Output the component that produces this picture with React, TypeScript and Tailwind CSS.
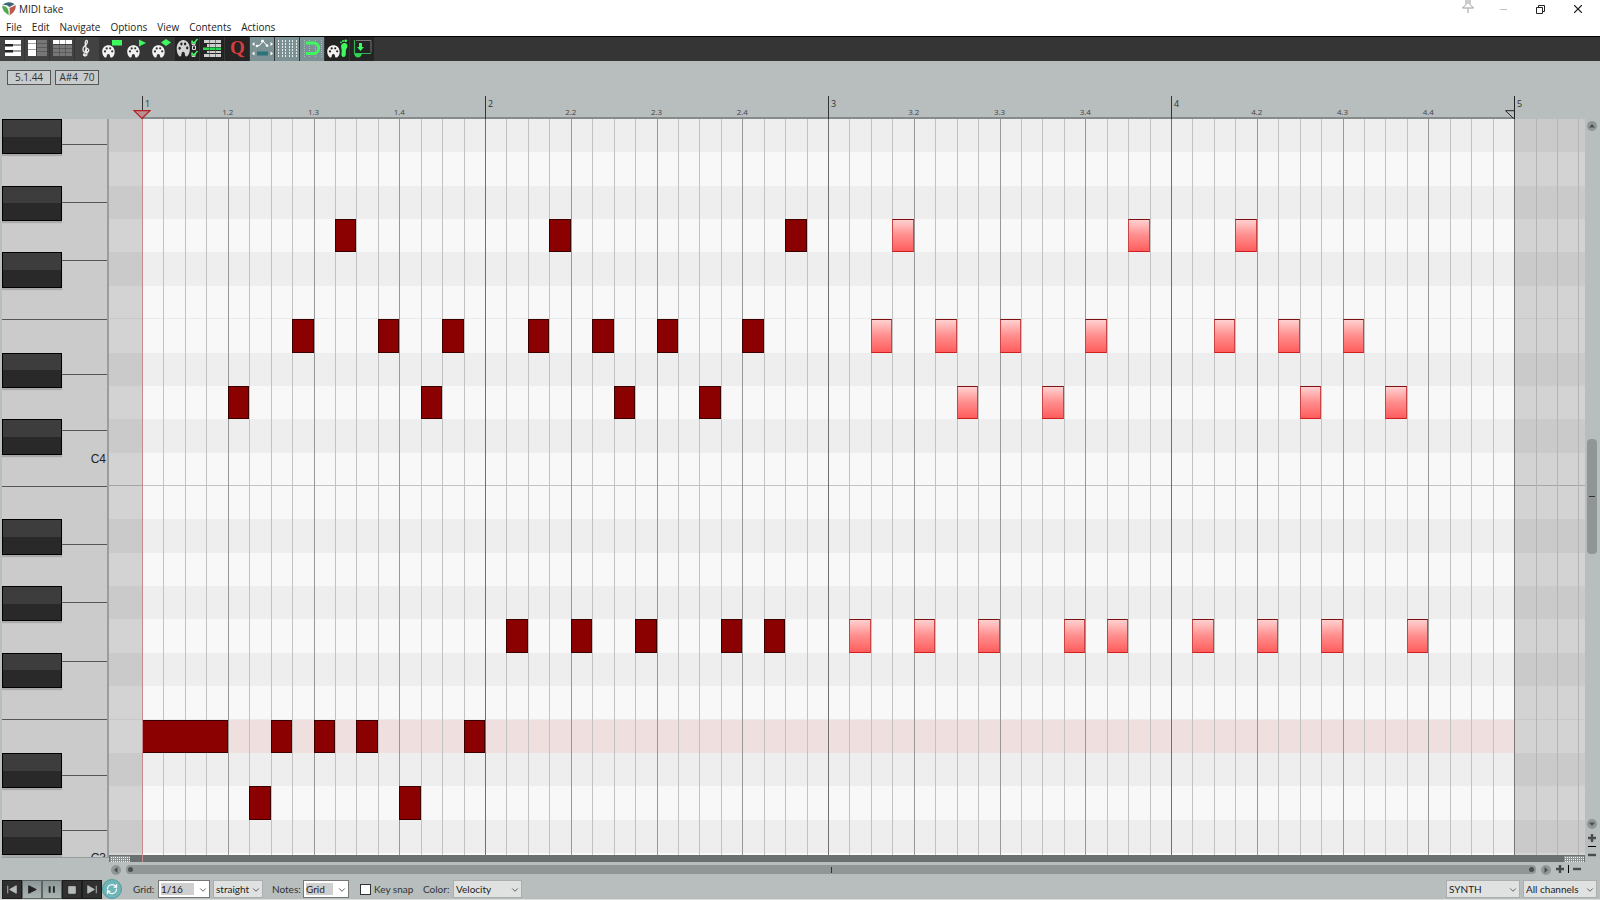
import React from "react";
import { ChevronDown, Minus, X, RefreshCw } from "lucide-react";

type Note = { row: number; step: number; length?: number; soft?: boolean };

const ROWS = Array.from({ length: 22 }, (_, i) => i);
const BLACK_ROWS = [0, 2, 4, 7, 9, 12, 14, 16, 19, 21];
const STEPS = Array.from({ length: 64 }, (_, i) => i);
const BEATS = Array.from({ length: 16 }, (_, i) => i);

// Heights of the white keys from the top, measured in semitone rows.
const WHITE_KEYS = [0.75, 1.75, 1.75, 1.75, 1.667, 1.667, 1.666, 1.75, 1.75, 1.75, 1.75, 1.667, 1.667, 0.666];

const PATTERN: [number, number[]][] = [
  [3, [9, 19, 30, 35, 46, 51]],
  [6, [7, 11, 14, 18, 21, 24, 28, 34, 37, 40, 44, 50, 53, 56]],
  [8, [4, 13, 22, 26, 38, 42, 54, 58]],
  [15, [17, 20, 23, 27, 29, 33, 36, 39, 43, 45, 49, 52, 55, 59]],
  [18, [0, 6, 8, 10, 15]],
  [20, [5, 12]],
];

const NOTES: Note[] = PATTERN.flatMap(([row, steps]) =>
  steps.map((step) => ({ row, step, length: row === 18 && step === 0 ? 4 : 1, soft: step >= 33 })),
);

function Palette({ x, y, sx = 1, sy = 1, fill = "#f2f2f2", hole = "#333" }: { x: number; y: number; sx?: number; sy?: number; fill?: string; hole?: string }) {
  return (
    <g transform={`translate(${x} ${y}) scale(${sx} ${sy})`}>
      <path
        d="M6.5 0.3C2.8 .3 .2 3 .2 6.6c0 2.6 1 4.8 2.6 5.8 1 .5 1.8 0 1.9-1.2.1-1.4.7-2.2 1.7-2.2s1.500.8 1.600 2c.1 1.300.8 1.900 2 1.400 1.700-.7 2.700-3 2.700-5.600C12.700 3 10 .3 6.500 .3Z"
        fill={fill}
      />
      <circle cx="3" cy="6.400" r="1.100" fill={hole} />
      <circle cx="4.700" cy="3.400" r="1.100" fill={hole} />
      <circle cx="8.200" cy="3.300" r="1.100" fill={hole} />
      <circle cx="10.200" cy="6.300" r="1.100" fill={hole} />
    </g>
  );
}

const G = "#3dfa5e";

const TOOLS: { name: string; tone?: "group" | "dark" | "on"; art: React.ReactNode }[] = [
  {
    name: "Piano roll",
    tone: "group",
    art: (
      <>
        <path d="M5 4h16v4.500H5zM5 9.500h16v5H5zM5 15.500h16V20H5z" fill="#fff" />
        <path d="M5 8h8v2.500H5zM5 14h8v2.500H5z" fill="#222" />
      </>
    ),
  },
  {
    name: "Named notes",
    tone: "group",
    art: (
      <>
        <path d="M3 4h8v3.500H3zM3 8h8v5.500H3zM3 14h8v6H3z" fill="#fff" />
        <path d="M12 4h10v3.500H12zM12 8h10v3.500H12zM12 12h10v3.500H12zM12 16h10v4H12z" fill="#777" />
      </>
    ),
  },
  {
    name: "Event list",
    tone: "group",
    art: (
      <>
        <path d="M3 4h6v4H3zM9.500 4h6v4h-6zM16 4h6v4h-6z" fill="#fff" />
        <path d="M3 9h6v3H3zM9.500 9h6v3h-6zM16 9h6v3h-6zM3 12.500h6v3.500H3zM9.500 12.500h6v3.500h-6zM16 12.500h6v3.500h-6zM3 16.500h6V20H3zM9.500 16.500h6V20h-6zM16 16.500h6V20h-6z" fill="#777" />
      </>
    ),
  },
  {
    name: "Musical notation",
    tone: "group",
    art: (
      <g fill="none" stroke="#eee" strokeWidth="1.300" strokeLinecap="round">
        <path d="M10.800 15.500c-1.200-1.800.4-3.400 1.800-2.900 1.900.7 1.400 4.100-1.200 4.100-3.700 0-4.500-4-2.200-6.200 1.800-1.800 3.600-3.100 3.200-5.200-.3-1.300-1.700-1.400-2.100.7-.4 2.400 1.800 9.100 1.700 12 0 2.200-3 2.600-3.100.9" />
        <circle cx="9.400" cy="18.700" r=".8" fill="#eee" />
      </g>
    ),
  },
  { name: "Color by rectangle", art: (<><Palette x={2} y={9} /><path d="M12 4h10v5.500H12z" fill={G} /></>) },
  { name: "Color by triangle", art: (<><Palette x={2} y={9} /><path d="M14 3.500v7l7-3.500z" fill={G} /></>) },
  { name: "Color by diamond", art: (<><Palette x={2} y={9} /><path d="M16 3l5 3.500-5 3.500-5-3.500z" fill={G} /></>) },
  {
    name: "Color options",
    tone: "dark",
    art: (
      <>
        <Palette x={1.5} y={3.5} sx={1.05} sy={1.35} fill="#d4d4d4" hole="#222" />
        <path d="M17.500 10h3v3.500h-3zM20 5.500v3h-3v-4M20 17v3.500h-3v-4" fill="none" stroke="#ddd" />
        <path d="M17 5l1.600 2.500L22.500 3M17 17l1.600 2.500L22.500 15" fill="none" stroke={G} strokeWidth="1.400" />
      </>
    ),
  },
  {
    name: "Lanes",
    tone: "dark",
    art: (
      <>
        <path d="M4 4h17v3H4zM7 8h14v3H7zM7 15h14v2H7zM4 18h17v3H4z" fill="#cfcfcf" />
        <path d="M3 11.500h18v2.500H3z" fill="#2fd552" />
        <path d="M9.500 4v17M15.500 4v17" stroke="#555" strokeWidth=".7" />
      </>
    ),
  },
  {
    name: "Quantize",
    tone: "dark",
    art: (
      <text x="12.500" y="18" textAnchor="middle" fill="#d93c3c" fontSize="19" fontWeight="700" fontFamily="Liberation Serif, serif">
        Q
      </text>
    ),
  },
  {
    name: "Envelope points",
    tone: "on",
    art: (
      <>
        <path d="M6 10.500l4-1.500 3-4 3 3.500 2 2" fill="none" stroke="#fff" />
        <g fill="#fff">
          <circle cx="7" cy="10" r="1.300" />
          <circle cx="12.500" cy="5" r="1.500" />
          <circle cx="17" cy="9.500" r="1.300" />
          <path d="M4.500 6v4L2 8zM20.500 6v4L23 8zM4.500 15.500v4L2 17.500zM20.500 15.500v4l2.500-2z" />
        </g>
        <path d="M7 15.500h11v4H7z" fill="#2a7378" />
      </>
    ),
  },
  {
    name: "Show grid",
    tone: "on",
    art: <path d="M3.500 4v17M7.500 4v17M10.500 4v17M14.500 4v17M17.500 4v17M21.500 4v17" stroke="#e4eaea" strokeDasharray="2 1" />,
  },
  {
    name: "Snap to grid",
    tone: "on",
    art: (
      <>
        <path d="M4.500 4v17M9.500 4v17M15.500 4v17M21.500 4v17" stroke="#a6bcb8" strokeDasharray="1 1" />
        <path d="M6 7h7.500a5.250 5.250 0 0 1 0 10.500H6" fill="none" stroke={G} strokeWidth="2.800" />
      </>
    ),
  },
  {
    name: "Step input",
    tone: "dark",
    art: (
      <>
        <Palette x={2} y={9} hole="#222" />
        <path d="M17 8c2-2 5.500-1 5.500 2 0 2-1.500 2.500-1.600 4.300C20.600 16.500 21.500 21 18.700 21s-2.300-3-2-5.500S15 10 17 8Z" fill={G} />
        <circle cx="16" cy="6.300" r=".9" fill={G} />
        <circle cx="18" cy="5" r="1" fill={G} />
        <circle cx="20.700" cy="4.800" r="1.400" fill={G} />
      </>
    ),
  },
  {
    name: "Dock editor",
    tone: "dark",
    art: (
      <>
        <path d="M6 4.500h15v12" fill="none" stroke="#777" />
        <path d="M4.500 4v13.500h16.500" fill="none" stroke="#2fb552" strokeWidth="1.200" />
        <path d="M9 7h3v4h2l-3.500 4L7 11h2z" fill={G} />
        <path d="M4 17.500h8q-1 4-4 4t-4-4z" fill="#2fd552" />
      </>
    ),
  },
];

const TONES = {
  group: "bg-[#424242]",
  dark: "bg-[#242424]",
  on: "bg-[#7c9194]",
  plain: "bg-[#353535]",
};

function Toolbar() {
  return (
    <div role="toolbar" className="flex h-[25px] shrink-0 items-stretch border-t border-black bg-[#353535]">
      {TOOLS.map((t) => (
        <button key={t.name} aria-label={t.name} className={`w-[25px] overflow-hidden border-r border-[#353535] ${TONES[t.tone ?? "plain"]}`}>
          <svg viewBox="0 1 24 24" className="h-[24px] w-[24px]">{t.art}</svg>
        </button>
      ))}
    </div>
  );
}

function TitleBar() {
  return (
    <header className="flex h-[18px] shrink-0 items-center bg-white pl-[2px]">
      <svg viewBox="0 0 14 14" className="h-[14px] w-[14px]">
        <path d="M0 3Q3 0 7 0t7 3c.3 4-2 8-7 11C2 11-.2 7 0 3Z" fill="#e9f0ee" />
        <path d="M.3 3Q3.500.2 7 .3q3 0 5.500 1.700L7.500 5Q4.500 2 .3 3Z" fill="#3f6473" />
        <path d="M.2 4Q4 3.500 5.500 6.500T6.500 13C2.500 10.500.2 7.500.2 4Z" fill="#4fa84a" />
        <path d="M7.500 6L13.700 3.300C14 7.500 11.500 11 7.700 13.300Q8.300 9 7.500 6Z" fill="#bd5950" />
      </svg>
      <h1 className="ml-[3px] text-[10px] leading-[18px]">MIDI take</h1>
      <div className="ml-auto flex h-full items-center">
        <button aria-label="Pin window" className="flex h-full w-[35px] justify-center">
          <svg viewBox="0 2 14 14" className="h-[14px] w-[14px]" fill="none" stroke="#999">
            <path d="M4 .5h6M5 1v5.500L1.500 10h11L9 6.500V1M7 1v5M7 10.500V15" />
          </svg>
        </button>
        <button aria-label="Minimize" className="flex w-[36px] justify-center text-[#bbb]">
          <Minus size={11} strokeWidth={2} />
        </button>
        <button aria-label="Restore" className="flex w-[38px] justify-center">
          <svg viewBox="0 0 10 10" className="h-[10px] w-[10px]" fill="none" stroke="#222">
            <path d="M1.500 3.500h6v6h-6zM3.500 3.500v-2h6v6h-2" />
          </svg>
        </button>
        <button aria-label="Close" className="flex w-[41px] justify-start pl-[12px]">
          <X size={14} strokeWidth={1.900} />
        </button>
      </div>
    </header>
  );
}

function Ruler() {
  return (
    <div className="flex h-[23px] shrink-0 pr-[15px] pl-[109px]">
      <div className="w-[33px]" />
      <div className="relative grid flex-1 grid-cols-16 border-b-2 border-[#868c8b]">
        {BEATS.map((b) => {
          const bar = Math.floor(b / 4) + 1;
          return b % 4 === 0 ? (
            <div key={b} className="-mb-[2px] border-l border-[#333] pl-[2px] text-[9px] leading-[16px] text-[#333]">{bar}</div>
          ) : (
            <div key={b} className="flex items-end text-[8px] leading-[10px] text-[#444]">
              <span className="-translate-x-1/2">{`${bar}.${(b % 4) + 1}`}</span>
            </div>
          );
        })}
        <svg viewBox="0 0 18 9" className="absolute -bottom-[2px] -left-[9px] h-[9px] w-[18px]">
          <path d="M1 .7h16L9 8.500z" fill="#b98f90" stroke="#b52025" strokeWidth="1.200" />
        </svg>
        <svg viewBox="0 0 9 9" className="absolute right-0 -bottom-[2px] h-[9px] w-[9px]">
          <path d="M.5.7H9M.5.7L8.500 8.500" fill="none" stroke="#222" />
        </svg>
      </div>
      <div className="w-[71px] border-l border-[#222] pl-[2px] text-[9px] leading-[16px] text-[#333]">5</div>
    </div>
  );
}

function Keyboard() {
  return (
    <div className="mb-[7px] ml-[2px] flex w-[107px] shrink-0 flex-col overflow-hidden border-r-2 border-b border-[#989e9d] bg-[#cbcbcb]">
      <div className="relative flex min-h-0 flex-1 flex-col">
        {WHITE_KEYS.map((h, i) => (
          <div key={i} className={i < WHITE_KEYS.length - 1 ? "min-h-0 basis-0 border-b border-[#555]" : "min-h-0 basis-0"} style={{ flexGrow: h }} />
        ))}
        <div className="absolute inset-0 grid grid-rows-22">
          {ROWS.map((r) =>
            BLACK_ROWS.includes(r) ? (
              <div key={r} className="-mb-[2px] flex w-[60px] flex-col border border-black bg-[#292929] shadow-[0_2px_1px_#aaaaaa]">
                <div className="h-1/2 bg-[#3d3d3d]" />
              </div>
            ) : (
              <div key={r} className="pr-px text-right font-['Liberation_Sans',sans-serif] text-[12px] leading-[12px] text-[#222]">{r === 10 ? "C4" : ""}</div>
            ),
          )}
        </div>
      </div>
      <div className="h-[4px] shrink-0 pr-px text-right font-['Liberation_Sans',sans-serif] text-[12px] leading-[10px] text-[#222]">C3</div>
    </div>
  );
}

function stepLine(i: number) {
  if (i === 0) return "border-l border-transparent";
  if (i % 16 === 0) return "border-l border-[#707070]";
  if (i % 4 === 0) return "border-l border-[#989898]";
  return "border-l border-[#c2c2c2]";
}

function Roll() {
  return (
    <div className="relative min-h-0 flex-1 bg-[#f8f8f8] pb-[2px]">
      <div className="grid h-full grid-rows-22">
        {ROWS.map((r) => (
          <div
            key={r}
            className={`${BLACK_ROWS.includes(r) ? "bg-[#eeeeee]" : "bg-[#f8f8f8]"} ${
              r === 10 ? "border-b border-[#c2c2c2]" : r === 5 || r === 17 ? "border-b border-[#ebebeb]" : ""
            }`}
          />
        ))}
      </div>
      <div className="absolute inset-0 flex">
        <div className="w-[33px] bg-black/15" />
        <div className="relative flex-1">
          <div className="absolute inset-0 grid grid-rows-22 pb-[2px]">
            <div className="row-start-19 bg-[#f0dfdf]" />
          </div>
          <div className="absolute inset-0 grid grid-cols-64">
            {STEPS.map((i) => (
              <div key={i} className={stepLine(i)} />
            ))}
          </div>
          <div className="absolute inset-0 grid grid-cols-64 grid-rows-22 pb-[2px]">
            {NOTES.map((n) => (
              <div
                key={`${n.row}-${n.step}`}
                className={
                  n.soft
                    ? "border border-t-[#7d1010] border-r-[#c94444] border-b-[#cf1f1f] border-l-[#c94444] bg-linear-to-b from-[#ffd0d0] via-[#ff8c8c] to-[#ff5c5c]"
                    : "border border-[#3a0000] bg-[#8b0000]"
                }
                style={{ gridRow: n.row + 1, gridColumn: `${n.step + 1} / span ${n.length ?? 1}` }}
              />
            ))}
          </div>
        </div>
        <div className="flex w-[71px] border-l border-[#777] bg-black/15">
          <div className="w-[22px] border-r border-[#b4b4b4]" />
          <div className="w-[21px] border-r border-[#b4b4b4]" />
          <div className="w-[21px] border-r border-[#b4b4b4]" />
        </div>
      </div>
      <div className="absolute top-0 -bottom-[7px] left-[33px] w-px bg-[#c98b8d]" />
    </div>
  );
}

const GRIP =
  "h-[6px] w-[20px] bg-[linear-gradient(#8c9291_1px,transparent_1px),linear-gradient(90deg,#8c9291_1px,#f4f6f6_1px)] bg-[size:2px_2px]";

function RoundButton({ label, d }: { label: string; d: string }) {
  return (
    <button aria-label={label} className="flex h-[10px] w-[10px] shrink-0 items-center justify-center rounded-full bg-[#909696]">
      <svg viewBox="0 0 6 6" className="h-[6px] w-[6px]" fill="#4b4f4f">
        <path d={d} />
      </svg>
    </button>
  );
}

function Zoom({ label, plus }: { label: string; plus?: boolean }) {
  return (
    <button aria-label={label} className="flex h-[8px] w-[8px] shrink-0 items-center">
      <svg viewBox="0 0 8 8" className="h-[8px] w-[8px]">
        <path d={plus ? "M0 4h8M4 0v8" : "M0 4h8"} stroke="#474b4b" strokeWidth="2.400" />
      </svg>
    </button>
  );
}

function VerticalScroll() {
  return (
    <div className="flex w-[15px] shrink-0 flex-col items-center pt-[2px] pr-px">
      <RoundButton label="Scroll up" d="M0 4.500h6L3 1z" />
      <div className="grow-[308]" />
      <div className="flex w-[10px] grow-[113] items-center justify-center rounded-[4px] bg-[#909696]">
        <div className="h-px w-[6px] bg-[#333]" />
      </div>
      <div className="grow-[265]" />
      <RoundButton label="Scroll down" d="M0 1.500h6L3 5z" />
      <div className="mt-[5px] flex flex-col items-center gap-[4px]">
        <Zoom label="Zoom in vertically" plus />
        <div className="h-px w-[8px] bg-black" />
        <Zoom label="Zoom out vertically" />
      </div>
      <div className="h-[6px]" />
    </div>
  );
}

function HorizontalScroll() {
  return (
    <div className="flex h-[12px] shrink-0 items-start pr-[19px] pl-[111px]">
      <RoundButton label="Scroll left" d="M4.500 0v6L1 3z" />
      <div className="mx-[5px] flex h-[9px] flex-1 items-center justify-between rounded-[4px] bg-[#909696] px-[2px]">
        <div className="h-[5px] w-[5px] rounded-full bg-[#4b4f4f]" />
        <div className="h-[6px] w-px bg-[#333]" />
        <div className="h-[5px] w-[5px] rounded-full bg-[#4b4f4f]" />
      </div>
      <RoundButton label="Scroll right" d="M1.500 0v6L5 3z" />
      <div className="ml-[5px] flex items-center gap-[4px]">
        <Zoom label="Zoom in horizontally" plus />
        <div className="h-[8px] w-px bg-black" />
        <Zoom label="Zoom out horizontally" />
      </div>
    </div>
  );
}

function Drop({ id, value, width, editable, label }: { id: string; value: string; width: string; editable?: boolean; label?: string }) {
  return (
    <div className={`relative h-[18px] border ${width} ${editable ? "border-[#777] bg-white" : "border-[#aaaeae] bg-[#e0e1e1]"}`}>
      <select
        id={id}
        aria-label={label}
        defaultValue={value}
        className={`h-full w-full appearance-none text-[10px] leading-[12px] text-[#222] outline-none ${
          editable ? "bg-[#cfcfcf] bg-clip-content py-[2px] pr-[15px] pl-[2px]" : "pr-[12px] pl-[2px]"
        }`}
      >
        <option>{value}</option>
      </select>
      <ChevronDown size={10} strokeWidth={2} className="pointer-events-none absolute top-[4px] right-px text-[#444]" />
    </div>
  );
}

const TRANSPORT = [
  { name: "Go to start", on: false, d: "M5 5v8M14 5v8L7 9z" },
  { name: "Play", on: true, d: "M6 5v8l8-4z" },
  { name: "Pause", on: true, d: "M7 5.500v7M11.500 5.500v7" },
  { name: "Stop", on: false, d: "M6 6h7v7H6z" },
  { name: "Go to end", on: false, d: "M14 5v8M5 5v8l7-4z" },
];

function Footer() {
  return (
    <footer className="flex h-[23px] shrink-0 items-center border-b border-[#d9dddc] pt-[2px] pr-[3px] pl-[2px] font-['Lato',sans-serif] text-[10px] text-[#333]">
      {TRANSPORT.map((t) => (
        <button
          key={t.name}
          aria-label={t.name}
          className={`h-[19px] w-[20px] border ${t.on ? "border-[#5d6464] bg-linear-to-b from-[#8d9797] to-[#a9b3b2]" : "border-[#1c1c1c] bg-[#303030]"}`}
        >
          <svg viewBox="0 0 19 18" className="h-[17px] w-[18px]">
            <path d={t.d} fill={t.on ? "#222" : "#b5bcbb"} stroke={t.on ? "#222" : "#b5bcbb"} strokeWidth={t.name === "Pause" ? 2 : 1} />
          </svg>
        </button>
      ))}
      <button aria-label="Toggle repeat" className="flex h-[20px] w-[20px] items-center justify-center rounded-full border border-[#4f9da0] bg-[#6fb4b6] text-white">
        <RefreshCw size={12} strokeWidth={2.500} />
      </button>
      <label htmlFor="grid" className="ml-[11px] w-[25px]">Grid:</label>
      <Drop id="grid" value="1/16" width="w-[52px]" editable />
      <div className="w-[3px]" />
      <Drop id="feel" label="Grid feel" value="straight" width="w-[50px]" />
      <label htmlFor="notes" className="ml-[9px] w-[31px]">Notes:</label>
      <Drop id="notes" value="Grid" width="w-[46px]" editable />
      <label className="ml-[11px] flex w-[51px] items-center gap-[3px] whitespace-nowrap">
        <input type="checkbox" className="h-[11px] w-[11px] shrink-0 appearance-none border border-[#333] bg-white checked:bg-[#333]" />
        Key snap
      </label>
      <label htmlFor="color" className="ml-[12px] w-[30px]">Color:</label>
      <Drop id="color" value="Velocity" width="w-[69px]" />
      <div className="ml-auto flex gap-[3px]">
        <Drop id="track" label="Track" value="SYNTH" width="w-[74px]" />
        <Drop id="channel" label="Channel" value="All channels" width="w-[74px]" />
      </div>
    </footer>
  );
}

export default function App() {
  return (
    <div className="flex h-screen flex-col overflow-hidden bg-[#b7bebd] font-['Open_Sans',sans-serif] text-[#222]">
      <TitleBar />
      <nav className="flex h-[18px] shrink-0 items-center gap-[10px] bg-white pl-[6px] text-[10px]">
        {["File", "Edit", "Navigate", "Options", "View", "Contents", "Actions"].map((m) => (
          <button key={m}>{m}</button>
        ))}
      </nav>
      <Toolbar />
      <div className="flex h-[35px] shrink-0 items-start gap-[4px] pt-[9px] pl-[7px] text-[10px] leading-[13px] text-[#333]">
        <output className="w-[44px] border border-[#555] bg-[#c8cbcb] text-center">5.1.44</output>
        <output className="w-[44px] border border-[#555] bg-[#c8cbcb] text-center whitespace-pre">A#4  70</output>
      </div>
      <Ruler />
      <main className="flex min-h-0 flex-1">
        <Keyboard />
        <div className="flex min-w-0 flex-1 flex-col pb-[3px]">
          <Roll />
          <div className="flex h-[7px] shrink-0 items-center justify-between bg-[#6a706f] px-px">
            <div className={GRIP} />
            <div className={GRIP} />
          </div>
        </div>
        <VerticalScroll />
      </main>
      <HorizontalScroll />
      <Footer />
    </div>
  );
}
